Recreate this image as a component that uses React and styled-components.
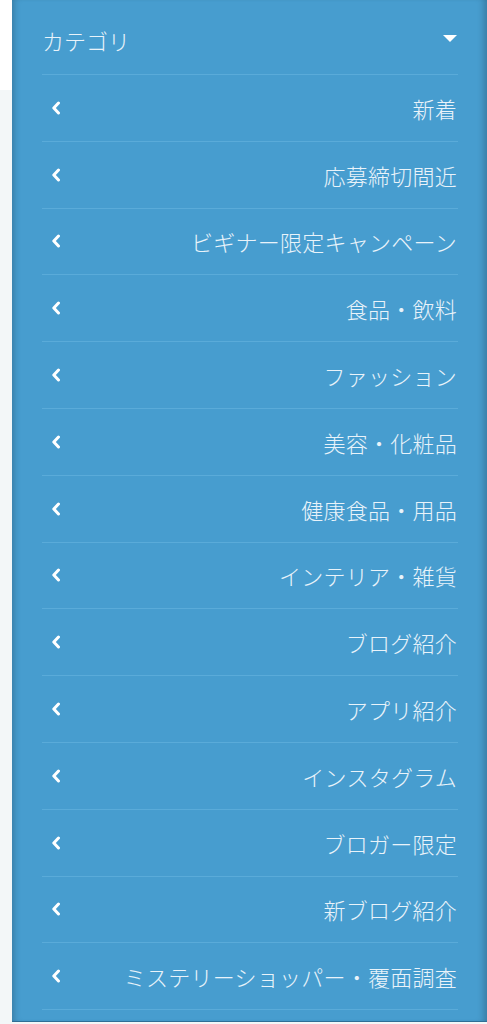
import styled, { createGlobalStyle } from 'styled-components';

const GlobalStyle = createGlobalStyle`
  html, body {
    margin: 0;
    padding: 0;
    background: #f3f7f8;
  }
  body {
    font-family: "Noto Sans CJK JP", "Noto Sans", sans-serif;
  }
`;

const Page = styled.div`
  display: flex;
  height: 1024px;
  overflow: hidden;
`;

const Gutter = styled.div`
  width: 12px;
  flex-shrink: 0;
  display: flex;
  flex-direction: column;
  & .top {
    height: 90px;
    background: #ffffff;
  }
  & .rest {
    flex: 1;
    background: #f3f7f8;
  }
`;

const Panel = styled.nav`
  flex: 1;
  height: 1021px;
  background: #479dcf;
  border-bottom: 1px solid #2f6f96;
  box-shadow: inset 7px 0 7px -5px rgba(0, 0, 0, 0.22),
    inset -8px 0 7px -5px rgba(0, 0, 0, 0.22);
  padding: 0 29px 0 30px;
  color: #e9f3fa;
`;

const Header = styled.div`
  height: 75px;
  box-sizing: border-box;
  display: flex;
  align-items: center;
  justify-content: space-between;
  border-bottom: 1px solid #5aabd9;
  padding-top: 6px;
  font-size: 22px;
  font-weight: 300;
`;

const Caret = styled.span`
  width: 0;
  height: 0;
  margin-right: 1px;
  margin-top: -3px;
  border-left: 7px solid transparent;
  border-right: 7px solid transparent;
  border-top: 7px solid #ffffff;
`;

const Item = styled.a`
  height: 66.8px;
  box-sizing: border-box;
  display: flex;
  align-items: center;
  justify-content: space-between;
  padding-left: 9px;
  padding-right: 1px;
  border-bottom: 1px solid #5aabd9;
  color: inherit;
  text-decoration: none;
  font-size: 22px;
  font-weight: 300;
  letter-spacing: 0.25px;
`;

const Chevron = () => (
  <svg width="10" height="14" viewBox="0 0 10 14" fill="none">
    <polyline
      points="7.5,2 2.8,7 7.5,12"
      stroke="#ffffff"
      strokeWidth="3"
      strokeLinecap="round"
      strokeLinejoin="round"
    />
  </svg>
);

const categories = [
  '新着',
  '応募締切間近',
  'ビギナー限定キャンペーン',
  '食品・飲料',
  'ファッション',
  '美容・化粧品',
  '健康食品・用品',
  'インテリア・雑貨',
  'ブログ紹介',
  'アプリ紹介',
  'インスタグラム',
  'ブロガー限定',
  '新ブログ紹介',
  'ミステリーショッパー・覆面調査',
];

const App = () => (
  <>
    <GlobalStyle />
    <Page>
      <Gutter>
        <div className="top" />
        <div className="rest" />
      </Gutter>
      <Panel>
        <Header>
          <span>カテゴリ</span>
          <Caret />
        </Header>
        {categories.map((name) => (
          <Item key={name} href="#">
            <Chevron />
            <span>{name}</span>
          </Item>
        ))}
      </Panel>
    </Page>
  </>
);

export default App;
